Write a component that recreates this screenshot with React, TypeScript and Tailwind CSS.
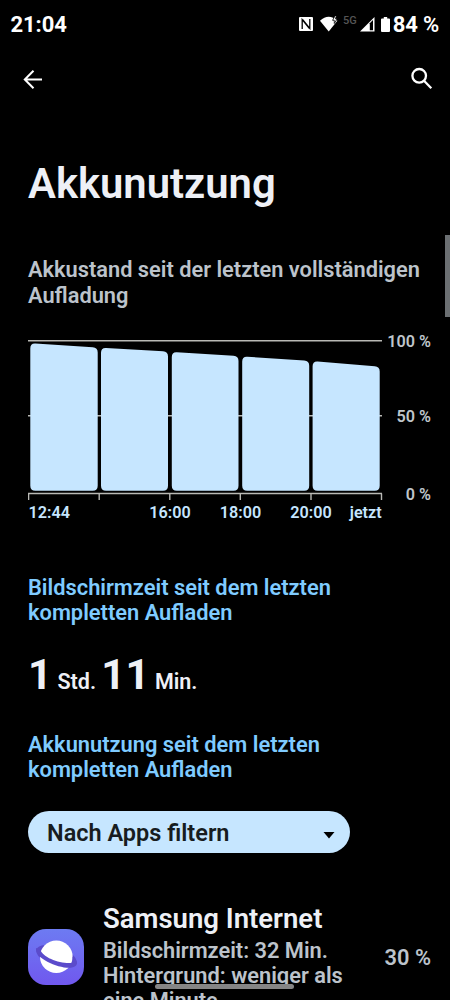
const bars = [
  { x: 30.3, w: 67.4, left: 343.2, right: 347.5 },
  { x: 101, w: 67, left: 347.8, right: 351.6 },
  { x: 171.8, w: 66.7, left: 352, right: 356 },
  { x: 242.2, w: 67, left: 356.4, right: 360.8 },
  { x: 312.6, w: 67.1, left: 361.2, right: 366.6 },
];

const ticks = [28.6, 99.2, 169.8, 240.3, 311, 381.5];

const yLabels = [
  { text: '100 %', y: 347 },
  { text: '50 %', y: 422 },
  { text: '0 %', y: 499.8 },
];

const xLabels = [
  { text: '12:44', x: 28.5, anchor: 'start' },
  { text: '16:00', x: 170, anchor: 'middle' },
  { text: '18:00', x: 240.5, anchor: 'middle' },
  { text: '20:00', x: 311, anchor: 'middle' },
  { text: 'jetzt', x: 381.7, anchor: 'end' },
] as const;

function barPath({ x, w, left, right }: (typeof bars)[number]) {
  const r = 5;
  const b = 490.8;
  const e = x + w;
  return `M${x} ${left + r}Q${x} ${left} ${x + r} ${left + 0.3}L${e - r} ${right - 0.3}Q${e} ${right} ${e} ${right + r}V${b - r}Q${e} ${b} ${e - r} ${b}H${x + r}Q${x} ${b} ${x} ${b - r}Z`;
}

function StatusBar() {
  return (
    <div className="flex h-12 items-center justify-between pl-[10.5px] pr-[11px] text-[22px] font-bold text-white">
      <span className="tracking-[-0.1px]">21:04</span>
      <div className="flex items-center">
        <svg width="14" height="14" viewBox="0 0 14 14" className="mr-[7.500px]">
          <rect width="14" height="14" rx="1" fill="#fff" />
          <path d="M3.200 12V2.500L10.300 11.300M10.800 2V11.500L3.700 2.700" fill="none" stroke="#000" strokeWidth="1.300" />
        </svg>
        <svg width="18" height="16" viewBox="0 0 18 16" className="mr-[5px]">
          <path d="M0 4.800Q8.700-3.500 17.400 4.800L8.700 15.500Z" fill="#fff" />
          <path d="M15.200-.5L12.600 4.300H14.300V7.500L17.200 2.800H15.500L16.500-.5Z" fill="#fff" stroke="#000" strokeWidth=".8" />
        </svg>
        <span className="mr-[3px] -mt-[7px] text-[11px] leading-none font-medium text-[#555]">5G</span>
        <svg width="15" height="15" viewBox="0 0 15 15" className="mr-[6px]">
          <path d="M0 14.500L14.500 0V14.500Z" fill="#fff" />
          <path d="M9.800 6.300L13 3V13.200H9.800Z" fill="#000" />
        </svg>
        <svg width="9" height="15" viewBox="0 0 9 15" className="mr-[3px]">
          <path d="M2.800 0H6.200V1.500H8Q9 1.500 9 2.500V14Q9 15 8 15H1Q0 15 0 14V2.500Q0 1.500 1 1.500H2.800Z" fill="#fff" />
        </svg>
        <span className="tracking-[-0.2px]">
          84 <span className="font-semibold">%</span>
        </span>
      </div>
    </div>
  );
}

function BatteryChart() {
  return (
    <svg width="422" height="200" viewBox="28 330 422 200" className="mt-[22px] block text-[16.200px] font-semibold">
      <g stroke="#b9b9b5" strokeWidth="1.4">
        <path d="M28 340.700H382M28 415.800H382M28 493.500H382" />
        {ticks.map((x) => (
          <path key={x} d={`M${x} 493.500V500`} />
        ))}
      </g>
      {bars.map((bar) => (
        <path key={bar.x} d={barPath(bar)} fill="#c6e6ff" />
      ))}
      {yLabels.map((label) => (
        <text key={label.text} x="431" y={label.y} textAnchor="end" fill="#bfc5cb">
          {label.text}
        </text>
      ))}
      {xLabels.map((label) => (
        <text key={label.text} x={label.x} y="518" textAnchor={label.anchor} fill="#c6e6ff">
          {label.text}
        </text>
      ))}
    </svg>
  );
}

function InternetIcon() {
  return (
    <svg width="56" height="56" viewBox="0 0 56 56" className="shrink-0">
      <defs>
        <linearGradient id="internet" x1="0" y1="0" x2="0" y2="1">
          <stop offset="0" stopColor="#6d7bf2" />
          <stop offset="1" stopColor="#7058ee" />
        </linearGradient>
      </defs>
      <rect width="56" height="56" rx="18" fill="url(#internet)" />
      <ellipse cx="28.400" cy="27.300" rx="21" ry="9.500" transform="rotate(19 28.400 27.300)" fill="#5b4bcb" />
      <circle cx="28.300" cy="27.800" r="16.300" fill="#fff" />
      <path
        d="M8 19C6.500 29.500 30 39.300 42 38.800C48 38.500 50 35 48.700 32C47.500 30 46.500 29 44.500 27.500C44.800 30.500 44.800 32.500 43.500 34C32 35 14.500 28.500 12.300 20.500Z"
        fill="#5b4bcb"
      />
    </svg>
  );
}

export default function App() {
  return (
    <div className="relative h-[1000px] w-[450px] overflow-hidden bg-black font-['Roboto',sans-serif]">
      <StatusBar />

      <header className="flex h-[62px] items-center justify-between pl-[21px] pr-[15px]">
        <svg width="24" height="24" viewBox="0 0 24 24" fill="none" stroke="#fff" strokeWidth="2">
          <path d="M21 12.500H4M12.500 3.800L3.800 12.500L12.500 21.200" />
        </svg>
        <svg width="26" height="26" viewBox="0 0 26 26" fill="none" stroke="#fff" strokeWidth="2.300">
          <circle cx="10.200" cy="9.800" r="6.800" />
          <path d="M15 14.800L22.300 22.200" />
        </svg>
      </header>

      <main className="pl-7">
        <h1 className="mt-[49px] text-[41.800px] leading-[50px] font-semibold text-[#eef0f6]">Akkunutzung</h1>

        <h2 className="mt-12 text-[21.800px] leading-[25.500px] font-semibold text-[#bcc3cb]">
          Akkustand seit der letzten vollständigen
          <br />
          Aufladung
        </h2>
        <BatteryChart />

        <h2 className="mt-[44.500px] text-[21.850px] leading-[25.300px] font-semibold text-[#7fcbff]">
          Bildschirmzeit seit dem letzten
          <br />
          kompletten Aufladen
        </h2>
        <p className="mt-[25px] h-[50px] text-[21.500px] leading-[50px] font-semibold text-[#eef0f6]">
          <span className="text-[42px] font-bold">1</span> Std. <span className="text-[42px] font-bold">11</span> Min.
        </p>

        <h2 className="mt-[31.500px] text-[21.850px] leading-[25.300px] font-semibold text-[#7fcbff]">
          Akkunutzung seit dem letzten
          <br />
          kompletten Aufladen
        </h2>

        <button className="mt-[28.500px] flex h-[42px] w-[322px] items-center justify-between rounded-full bg-[#c6e6ff] pt-[3px] pr-[15px] pl-[19px] text-[23.500px] font-semibold text-[#171c20]">
          Nach Apps filtern
          <svg width="12" height="7" viewBox="0 0 12 7" className="mt-[4px]">
            <path d="M.500 0H11.500L6 6.500Z" fill="#000" />
          </svg>
        </button>

        <div className="mt-[50px] flex pr-[19px]">
          <div className="mt-[26px] mr-[19px]">
            <InternetIcon />
          </div>
          <div className="flex-1 whitespace-nowrap">
            <h3 className="pt-[0.500px] text-[27.500px] leading-[32px] font-semibold text-[#eef0f6]">Samsung Internet</h3>
            <p className="mt-[2.700px] text-[21.800px] leading-[25.300px] font-semibold text-[#bcc3cb]">
              Bildschirmzeit: 32 Min.
              <br />
              Hintergrund: weniger als
              <br />
              eine Minute
            </p>
          </div>
          <span className="mt-[42.500px] text-[21.800px] leading-[26px] font-semibold text-[#bcc3cb]">30 %</span>
        </div>
      </main>

      <div className="absolute top-[235px] right-0 h-[82px] w-[5px] bg-[#6b6f72]" />
      <div className="absolute top-[984px] left-[155px] h-[5px] w-[139px] rounded-full bg-[#858585]" />
    </div>
  );
}
